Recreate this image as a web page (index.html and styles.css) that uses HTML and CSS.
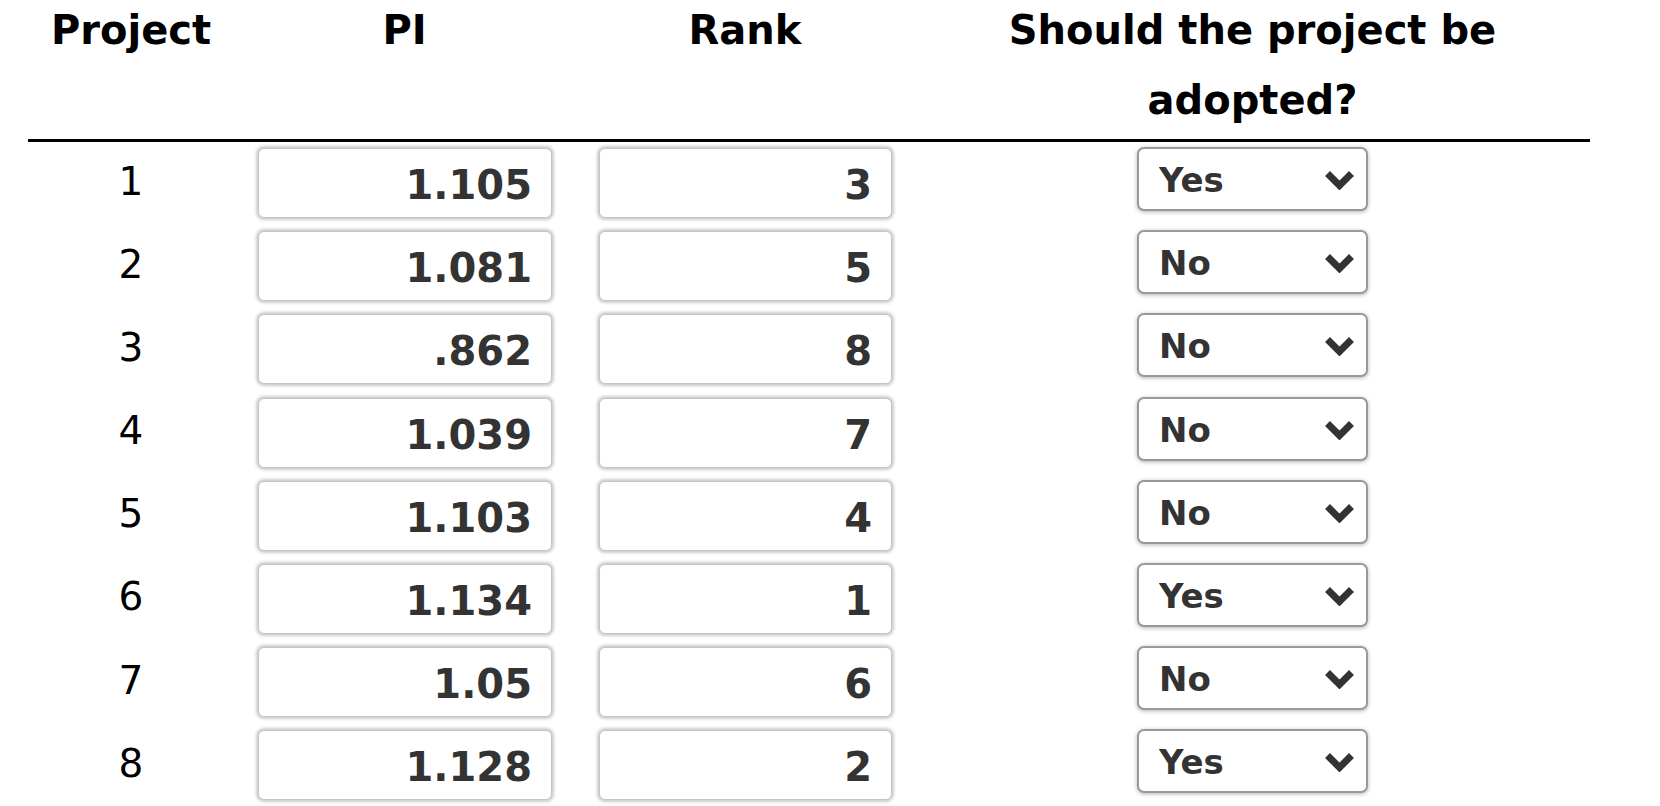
FILE: index.html
```html
<!DOCTYPE html>
<html lang="en">
<head>
<meta charset="utf-8">
<title>Project adoption</title>
<link rel="stylesheet" href="styles.css">
</head>
<body>
<div class="table" role="table">
  <div class="th" role="columnheader">Project</div>
  <div class="th" role="columnheader">PI</div>
  <div class="th" role="columnheader">Rank</div>
  <div class="th" role="columnheader">Should the project be adopted?</div>

  <div class="num">1</div>
  <div class="field"><input type="text" value="1.105" readonly></div>
  <div class="field"><input type="text" value="3" readonly></div>
  <div class="choice"><div class="select-wrap"><select><option selected>Yes</option><option>No</option></select><svg class="chev" viewBox="0 0 31 20"><polyline points="3.5,3.5 15.5,15.5 27.5,3.5"/></svg></div></div>

  <div class="num">2</div>
  <div class="field"><input type="text" value="1.081" readonly></div>
  <div class="field"><input type="text" value="5" readonly></div>
  <div class="choice"><div class="select-wrap"><select><option>Yes</option><option selected>No</option></select><svg class="chev" viewBox="0 0 31 20"><polyline points="3.5,3.5 15.5,15.5 27.5,3.5"/></svg></div></div>

  <div class="num">3</div>
  <div class="field"><input type="text" value=".862" readonly></div>
  <div class="field"><input type="text" value="8" readonly></div>
  <div class="choice"><div class="select-wrap"><select><option>Yes</option><option selected>No</option></select><svg class="chev" viewBox="0 0 31 20"><polyline points="3.5,3.5 15.5,15.5 27.5,3.5"/></svg></div></div>

  <div class="num">4</div>
  <div class="field"><input type="text" value="1.039" readonly></div>
  <div class="field"><input type="text" value="7" readonly></div>
  <div class="choice"><div class="select-wrap"><select><option>Yes</option><option selected>No</option></select><svg class="chev" viewBox="0 0 31 20"><polyline points="3.5,3.5 15.5,15.5 27.5,3.5"/></svg></div></div>

  <div class="num">5</div>
  <div class="field"><input type="text" value="1.103" readonly></div>
  <div class="field"><input type="text" value="4" readonly></div>
  <div class="choice"><div class="select-wrap"><select><option>Yes</option><option selected>No</option></select><svg class="chev" viewBox="0 0 31 20"><polyline points="3.5,3.5 15.5,15.5 27.5,3.5"/></svg></div></div>

  <div class="num">6</div>
  <div class="field"><input type="text" value="1.134" readonly></div>
  <div class="field"><input type="text" value="1" readonly></div>
  <div class="choice"><div class="select-wrap"><select><option selected>Yes</option><option>No</option></select><svg class="chev" viewBox="0 0 31 20"><polyline points="3.5,3.5 15.5,15.5 27.5,3.5"/></svg></div></div>

  <div class="num">7</div>
  <div class="field"><input type="text" value="1.05" readonly></div>
  <div class="field"><input type="text" value="6" readonly></div>
  <div class="choice"><div class="select-wrap"><select><option>Yes</option><option selected>No</option></select><svg class="chev" viewBox="0 0 31 20"><polyline points="3.5,3.5 15.5,15.5 27.5,3.5"/></svg></div></div>

  <div class="num">8</div>
  <div class="field"><input type="text" value="1.128" readonly></div>
  <div class="field"><input type="text" value="2" readonly></div>
  <div class="choice"><div class="select-wrap"><select><option selected>Yes</option><option>No</option></select><svg class="chev" viewBox="0 0 31 20"><polyline points="3.5,3.5 15.5,15.5 27.5,3.5"/></svg></div></div>
</div>
</body>
</html>
```
FILE: styles.css
```css
html {
  overflow: hidden;
}
body {
  margin: 0;
  background: #fff;
  font-family: "DejaVu Sans", Verdana, sans-serif;
  color: #000;
}
.table {
  display: grid;
  grid-template-columns: 206px 341px 340px 675px;
  grid-template-rows: auto repeat(8, 83.2px);
  width: 1562px;
  margin: -5.5px 0 0 28px;
}
.th {
  font-weight: bold;
  font-size: 40px;
  line-height: 70px;
  text-align: center;
  padding: 0 0 4.5px;
  border-bottom: 3px solid #000;
}
.num {
  font-size: 39px;
  line-height: 40px;
  text-align: center;
  padding-top: 19.5px;
}
.field {
  padding: 6px 23px 0 24px;
}
.field input {
  display: block;
  box-sizing: border-box;
  width: 100%;
  height: 70px;
  margin: 0;
  border: 1px solid #c4c4c4;
  border-radius: 6px;
  box-shadow: 0 0 3px 2px rgba(0, 0, 0, 0.2);
  background: #fff;
  padding: 4px 19px 0 10px;
  font-family: "DejaVu Sans", Verdana, sans-serif;
  font-weight: bold;
  font-size: 40px;
  color: #333;
  text-align: right;
  outline: none;
}
.choice {
  display: flex;
  justify-content: center;
  align-items: flex-start;
  padding-top: 5px;
}
.select-wrap {
  position: relative;
  width: 231px;
  height: 64px;
}
.select-wrap select {
  appearance: none;
  -webkit-appearance: none;
  box-sizing: border-box;
  width: 100%;
  height: 100%;
  margin: 0;
  padding: 2px 0 0 20px;
  border: 2px solid #999;
  border-radius: 7px;
  background: #fff;
  box-shadow: 0 1px 4px rgba(0, 0, 0, 0.3);
  font-family: "DejaVu Sans", Verdana, sans-serif;
  font-weight: bold;
  font-size: 34px;
  color: #333;
  outline: none;
}
.chev {
  position: absolute;
  right: 13px;
  top: 23px;
  width: 31px;
  height: 20px;
  pointer-events: none;
}
.chev polyline {
  fill: none;
  stroke: #333;
  stroke-width: 7;
  stroke-linejoin: miter;
  stroke-linecap: butt;
}
```
